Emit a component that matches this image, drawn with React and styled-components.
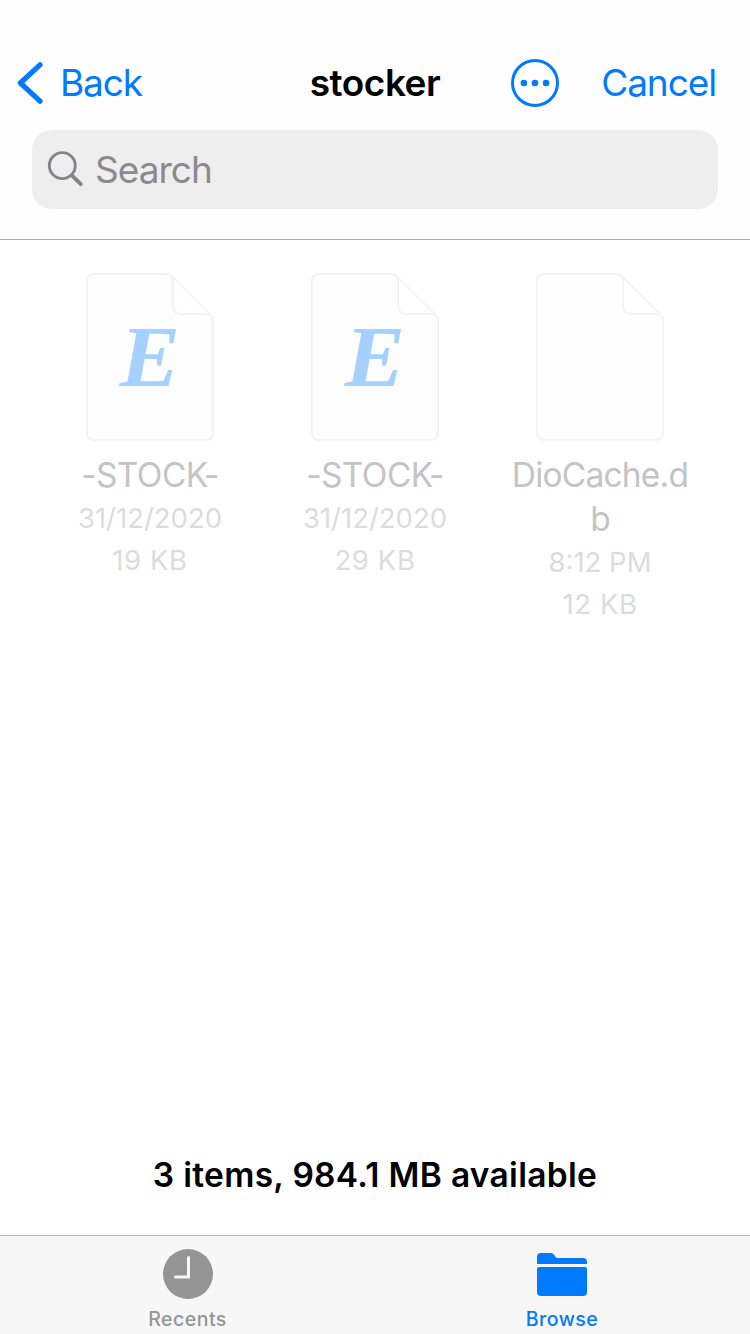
import React from 'react'
import styled, { createGlobalStyle } from 'styled-components'

const GlobalStyle = createGlobalStyle`
    * {
        box-sizing: border-box;
    }
    body {
        margin: 0;
        background-color: #fff;
        font-family: Inter, "Liberation Sans", sans-serif;
    }
    button {
        padding: 0;
        border: 0;
        background: none;
        font: inherit;
    }
    svg {
        display: block;
        flex: none;
    }
`

const Screen = styled.div`
    display: flex;
    flex-direction: column;
    width: 750px;
    height: 1334px;
    overflow: hidden;
`

const Header = styled.header`
    height: 240px;
    padding-top: 43px;
    background-color: #fefefe;
    border-bottom: 1px solid #b2b2b2;
`

const NavBar = styled.nav`
    display: grid;
    grid-template-columns: 1fr auto 1fr;
    align-items: center;
    height: 80px;
    padding: 0 34px 0 17px;
`

const NavButton = styled.button`
    display: flex;
    align-items: center;
    gap: ${(props) => props.$gap || 0};
    color: #007aff;
    font-size: 37px;
    line-height: 48px;
    letter-spacing: ${(props) => props.$spacing};
`

const Title = styled.h1`
    margin: 0 0 0 17px;
    font-size: 37px;
    font-weight: 600;
    line-height: 48px;
    letter-spacing: -0.5px;
`

const NavActions = styled.div`
    display: flex;
    align-items: center;
    justify-content: flex-end;
    gap: 42px;
`

const SearchField = styled.div`
    display: flex;
    align-items: center;
    gap: 11px;
    height: 79px;
    margin: 7px 32px 0;
    padding-left: 15px;
    border-radius: 20px;
    background-color: #eee;
    color: #8a8a8e;
    font-size: 37px;
    letter-spacing: -1px;
`

const Files = styled.main`
    flex: 1;
    display: grid;
    grid-template-columns: repeat(3, 225px);
    justify-content: center;
    align-content: start;
    padding-top: 33px;
`

const File = styled.article`
    display: flex;
    flex-direction: column;
    align-items: center;
    text-align: center;
`

const FileIcon = styled.div`
    display: grid;
    margin-bottom: 12px;

    > * {
        grid-area: 1 / 1;
    }
`

const FileLetter = styled.span`
    align-self: center;
    justify-self: center;
    color: #a6d0ff;
    font-family: "Liberation Serif", serif;
    font-size: 87px;
    font-style: italic;
    font-weight: 700;
    line-height: 88px;
    transform: scaleX(1.04);
`

const FileName = styled.div`
    width: 184px;
    color: #c4c4c5;
    font-size: 33.5px;
    line-height: 44px;
    letter-spacing: ${(props) => props.$spacing};
    word-break: break-all;
`

const FileMeta = styled.div`
    color: #dcdcdd;
    font-size: 27.5px;
    line-height: 42px;
    letter-spacing: ${(props) => props.$spacing || '0'};
`

const Summary = styled.p`
    margin: 0;
    height: 80px;
    font-size: 33.5px;
    font-weight: 600;
    line-height: 40px;
    text-align: center;
    letter-spacing: 0.3px;
`

const TabBar = styled.footer`
    display: grid;
    grid-template-columns: 1fr 1fr;
    height: 99px;
    border-top: 1px solid #b2b2b2;
    background-color: #f7f7f7;
`

const Tab = styled.button`
    display: flex;
    flex-direction: column;
    align-items: center;
    justify-content: flex-start;
    padding: 13px ${(props) => (props.$active ? '1px' : 0)} 0 0;
    color: ${(props) => (props.$active ? '#007aff' : '#959595')};
    font-size: 19.5px;
    font-weight: 500;
    line-height: 24px;
    letter-spacing: 0.5px;

    svg {
        margin-bottom: 8px;
    }
`

const BackIcon = () => (
    <svg width="27" height="44" viewBox="0 0 27 44" fill="none" stroke="currentColor" strokeWidth="5.2" strokeLinecap="round" strokeLinejoin="round">
        <path d="M23 3.8 3.4 22 23 40.2" />
    </svg>
)

const MoreIcon = () => (
    <svg width="48" height="48" viewBox="0 0 48 48" fill="currentColor">
        <circle cx="24" cy="24" r="22.5" fill="none" stroke="currentColor" strokeWidth="3" />
        <circle cx="12.9" cy="24" r="3.3" />
        <circle cx="24" cy="24" r="3.3" />
        <circle cx="35.1" cy="24" r="3.3" />
    </svg>
)

const SearchIcon = () => (
    <svg width="37" height="37" viewBox="0 0 37 37" fill="none" stroke="#848488" strokeLinecap="round">
        <circle cx="15.3" cy="14.6" r="13" strokeWidth="2.9" />
        <path d="m24.8 24.4 9 8.8" strokeWidth="3.8" />
    </svg>
)

const PageIcon = () => (
    <svg width="128" height="168" viewBox="0 0 128 168">
        <path d="M8 1H80Q84 1 87 4L124 40Q127 43 127 48V160Q127 167 120 167H8Q1 167 1 160V8Q1 1 8 1Z" fill="#fdfdfd" />
        <path d="M87 4V32Q87 41 96 41H124Z" fill="#fff" />
        <g fill="none" stroke="#f3f3f3" strokeWidth="2">
            <path d="M86 3.5Q87 5 87 8V32Q87 41 96 41H119Q123 41 125 42" />
            <path d="M125.5 42.5Q127 45 127 48V160Q127 167 120 167H8Q1 167 1 160V8Q1 1 8 1H80Q84 1 86 3.5" />
            <path d="M86 3.5 124.5 41.5" strokeWidth="1.6" />
        </g>
    </svg>
)

const ClockIcon = () => (
    <svg width="50" height="50" viewBox="0 0 50 50">
        <circle cx="25" cy="25" r="25" fill="currentColor" />
        <path d="M25.5 8.5V28H12.5" fill="none" stroke="#f7f7f7" strokeWidth="3" strokeLinecap="round" />
    </svg>
)

const FolderIcon = () => (
    <svg width="50" height="50" viewBox="0 0 50 50" fill="currentColor">
        <path d="M0 15V8Q0 4 4 4H14Q16 4 17.2 5.8L18.2 7.4Q19.2 9 21 9H46Q50 9 50 13V15Z" />
        <path d="M2 18H48Q50 18 50 20V43Q50 47 46 47H4Q0 47 0 43V20Q0 18 2 18Z" />
    </svg>
)

const files = [
    { id: 1, name: '-STOCK-', date: '31/12/2020', size: '19 KB', letter: 'E' },
    { id: 2, name: '-STOCK-', date: '31/12/2020', size: '29 KB', letter: 'E' },
    { id: 3, name: 'DioCache.db', date: '8:12 PM', size: '12 KB', spacing: '-0.8px' },
]

const App = () => {
    return (
        <Screen>
            <GlobalStyle />
            <Header>
                <NavBar>
                    <NavButton $gap="16px" $spacing="-1.1px">
                        <BackIcon />
                        Back
                    </NavButton>
                    <Title>stocker</Title>
                    <NavActions>
                        <NavButton aria-label="More">
                            <MoreIcon />
                        </NavButton>
                        <NavButton $spacing="-1.1px">Cancel</NavButton>
                    </NavActions>
                </NavBar>
                <SearchField>
                    <SearchIcon />
                    Search
                </SearchField>
            </Header>
            <Files>
                {files.map((file) => (
                    <File key={file.id}>
                        <FileIcon>
                            <PageIcon />
                            {file.letter && <FileLetter>{file.letter}</FileLetter>}
                        </FileIcon>
                        <FileName $spacing={file.spacing || '-0.6px'}>{file.name}</FileName>
                        <FileMeta>{file.date}</FileMeta>
                        <FileMeta $spacing="0.6px">{file.size}</FileMeta>
                    </File>
                ))}
            </Files>
            <Summary>3 items, 984.1 MB available</Summary>
            <TabBar>
                <Tab>
                    <ClockIcon />
                    Recents
                </Tab>
                <Tab $active>
                    <FolderIcon />
                    Browse
                </Tab>
            </TabBar>
        </Screen>
    )
}

export default App
